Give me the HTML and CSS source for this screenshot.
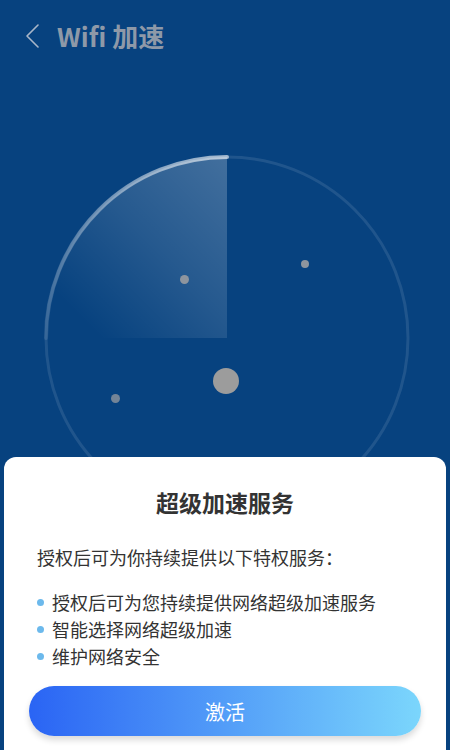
FILE: index.html
```html
<!DOCTYPE html>
<html lang="zh-CN">
<head>
    <meta charset="UTF-8">
    <meta name="viewport" content="width=device-width, initial-scale=1.0">
    <title>Wifi 加速</title>
    <link rel="stylesheet" href="styles.css">
</head>
<body>
    <header class="top-bar">
        <svg class="back-icon" width="14" height="24" viewBox="0 0 14 24">
            <polyline points="12,1 1,12 12,23" fill="none" stroke="#a9b6c8" stroke-width="1.6" stroke-linecap="round" stroke-linejoin="round"/>
        </svg>
        <h1 class="page-title">Wifi 加速</h1>
    </header>

    <main>
        <div class="radar">
            <div class="radar-sweep"></div>
            <svg class="radar-ring" width="366" height="366" viewBox="0 0 366 366">
                <defs>
                    <linearGradient id="arcGlow" x1="0" y1="1" x2="1" y2="0">
                        <stop offset="0" stop-color="#ffffff" stop-opacity="0.1"/>
                        <stop offset="1" stop-color="#ffffff" stop-opacity="0.6"/>
                    </linearGradient>
                </defs>
                <circle cx="183" cy="183" r="181" fill="none" stroke="rgba(255,255,255,0.1)" stroke-width="3"/>
                <path d="M 2 183 A 181 181 0 0 1 183 2" fill="none" stroke="url(#arcGlow)" stroke-width="4" stroke-linecap="round"/>
            </svg>
            <span class="dot dot-a"></span>
            <span class="dot dot-b"></span>
            <span class="dot dot-c"></span>
            <span class="dot dot-center"></span>
        </div>
    </main>

    <section class="sheet">
        <h2 class="sheet-title">超级加速服务</h2>
        <p class="sheet-intro">授权后可为你持续提供以下特权服务：</p>
        <ul class="perk-list">
            <li>授权后可为您持续提供网络超级加速服务</li>
            <li>智能选择网络超级加速</li>
            <li>维护网络安全</li>
        </ul>
        <button class="activate-btn" type="button">激活</button>
    </section>
</body>
</html>
```

FILE: styles.css
```css
* {
    margin: 0;
    padding: 0;
    box-sizing: border-box;
}

body {
    font-family: "Noto Sans CJK SC", "Noto Sans", sans-serif;
    background-color: #07427f;
    color: #333;
    width: 450px;
    height: 750px;
    overflow: hidden;
}

/* Header */
.top-bar {
    display: flex;
    align-items: center;
    height: 72px;
    padding-left: 26px;
}

.back-icon {
    display: block;
    margin-right: 17px;
}

.page-title {
    font-size: 26px;
    font-weight: bold;
    color: #8e99a8;
    line-height: 1;
}

/* Radar */
main {
    padding-top: 83px;
}

.radar {
    position: relative;
    width: 366px;
    height: 366px;
    margin-left: 44px;
}

.radar-sweep {
    position: absolute;
    top: 2px;
    left: 2px;
    width: 181px;
    height: 181px;
    border-top-left-radius: 181px;
    background: linear-gradient(to bottom left,
        rgba(255, 255, 255, 0.24) 0%,
        rgba(255, 255, 255, 0.12) 45%,
        rgba(255, 255, 255, 0) 85%);
}

.radar-ring {
    position: absolute;
    top: 0;
    left: 0;
}

.dot {
    position: absolute;
    border-radius: 50%;
    background-color: #8e959e;
}

.dot-a {
    width: 9px;
    height: 9px;
    left: 136px;
    top: 120px;
}

.dot-b {
    width: 8px;
    height: 8px;
    left: 257px;
    top: 105px;
}

.dot-c {
    width: 9px;
    height: 9px;
    left: 67px;
    top: 239px;
    opacity: 0.8;
}

.dot-center {
    width: 26px;
    height: 26px;
    left: 169px;
    top: 213px;
    background-color: #9c9c9c;
}

/* Bottom sheet */
.sheet {
    position: fixed;
    left: 4px;
    right: 4px;
    bottom: 0;
    height: 293px;
    background-color: #fff;
    border-radius: 12px 12px 0 0;
    padding: 28px 25px 0 33px;
}

.sheet-title {
    text-align: center;
    font-size: 23px;
    font-weight: bold;
    color: #333;
    line-height: 34px;
    margin-left: -8px;
}

.sheet-intro {
    font-size: 18px;
    line-height: 27px;
    margin-top: 25px;
    color: #333;
}

.perk-list {
    list-style: none;
    margin-top: 18px;
}

.perk-list li {
    display: flex;
    align-items: center;
    font-size: 18px;
    line-height: 27px;
}

.perk-list li::before {
    content: "";
    width: 7px;
    height: 7px;
    border-radius: 50%;
    background-color: #6cb9ec;
    margin-right: 8px;
    flex-shrink: 0;
}

.activate-btn {
    display: block;
    width: 392px;
    height: 50px;
    margin: 16px 0 0 -8px;
    border: none;
    border-radius: 25px;
    background: linear-gradient(90deg, #2a64f4, #7bd6fc);
    color: #fff;
    font-family: inherit;
    font-size: 20px;
    box-shadow: 0 4px 6px rgba(0, 0, 0, 0.15);
}
```
